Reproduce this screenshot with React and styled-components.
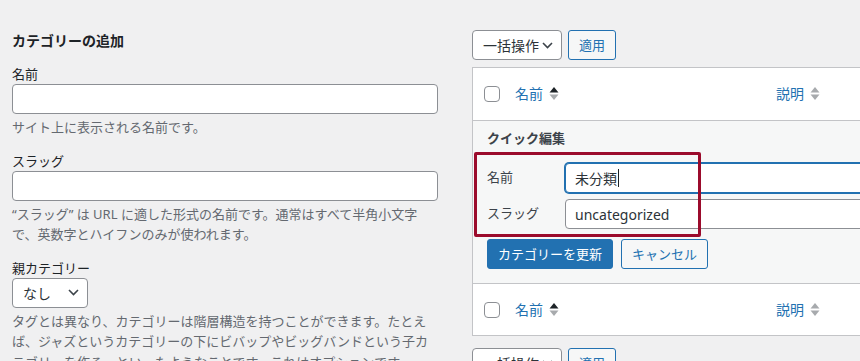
import React from "react";
import styled, { createGlobalStyle } from "styled-components";

const FONT = `"Noto Sans", "Noto Sans CJK JP", sans-serif`;

const GlobalStyle = createGlobalStyle`
  body {
    margin: 0;
    background: #f0f0f1;
    font-family: ${FONT};
    color: #1d2327;
    overflow: hidden;
  }
`;

function Chevron() {
    return (
        <svg width="11" height="7" viewBox="0 0 11 7">
            <polyline points="1,1 5.5,5.5 10,1" fill="none" stroke="#3c434a" strokeWidth="1.6" />
        </svg>
    );
}

function SortArrows({ active }) {
    return (
        <svg width="10" height="14" viewBox="0 0 10 14">
            <polygon points="5,0 9.5,5.5 0.5,5.5" fill={active ? "#1d2327" : "#a7aaad"} />
            <polygon points="0.5,7.5 9.5,7.5 5,13" fill="#a7aaad" />
        </svg>
    );
}

function BulkActions() {
    return (
        <Toolbar>
            <SelectBox width={90}>
                一括操作
                <Chevron />
            </SelectBox>
            <Button>適用</Button>
        </Toolbar>
    );
}

function HeaderRow({ top }) {
    return (
        <TableRow top={top}>
            <CheckCell><Checkbox /></CheckCell>
            <SortLink>名前 <SortArrows active /></SortLink>
            <SortLink>説明 <SortArrows /></SortLink>
        </TableRow>
    );
}

export default function App() {
    return (
        <Main>
            <GlobalStyle />
            <LeftCol>
                <Heading>カテゴリーの追加</Heading>
                <Field>
                    <Label>名前</Label>
                    <TextInput />
                    <Desc>サイト上に表示される名前です。</Desc>
                </Field>
                <Field>
                    <Label>スラッグ</Label>
                    <TextInput />
                    <Desc>
                        “スラッグ” は URL に適した形式の名前です。通常はすべて半角小文字<br />
                        で、英数字とハイフンのみが使われます。
                    </Desc>
                </Field>
                <Field>
                    <Label>親カテゴリー</Label>
                    <SelectBox width={76}>
                        なし
                        <Chevron />
                    </SelectBox>
                    <Desc>
                        タグとは異なり、カテゴリーは階層構造を持つことができます。たとえ<br />
                        ば、ジャズというカテゴリーの下にビバップやビッグバンドという子カ<br />
                        テゴリーを作る、といったようなことです。これはオプションです。
                    </Desc>
                </Field>
            </LeftCol>

            <RightCol>
                <BulkActions />
                <Table>
                    <HeaderRow />
                    <QuickEdit>
                        <QuickTitle>クイック編集</QuickTitle>
                        <EditRow>
                            <EditLabel>名前</EditLabel>
                            <EditInput focused>
                                未分類<Caret />
                            </EditInput>
                        </EditRow>
                        <EditRow>
                            <EditLabel>スラッグ</EditLabel>
                            <EditInput>uncategorized</EditInput>
                        </EditRow>
                        <Actions>
                            <Button primary>カテゴリーを更新</Button>
                            <Button>キャンセル</Button>
                        </Actions>
                        <Highlight />
                    </QuickEdit>
                    <HeaderRow top />
                </Table>
                <BottomBar>
                    <BulkActions />
                </BottomBar>
            </RightCol>
        </Main>
    );
}

const Main = styled.div`
    display: flex;
    gap: 34px;
    padding-left: 12px;
    width: 860px;
    height: 361px;
    box-sizing: border-box;
    overflow: hidden;
`;

const LeftCol = styled.div`
    flex: none;
    width: 426px;
    padding-top: 31px;
`;

const Heading = styled.h2`
    margin: 0 0 13px;
    font-size: 14px;
    font-weight: 700;
    line-height: 20px;
`;

const Field = styled.div`
    margin-bottom: 13px;
`;

const Label = styled.label`
    display: block;
    font-size: 13px;
    line-height: 20px;
`;

const TextInput = styled.div`
    width: 100%;
    height: 30px;
    box-sizing: border-box;
    background: #fff;
    border: 1px solid #8c8f94;
    border-radius: 4px;
`;

const Desc = styled.p`
    margin: 3px 0 0;
    font-size: 13px;
    line-height: 20.5px;
    color: #646970;
`;

const SelectBox = styled.div`
    width: ${p => p.width}px;
    height: 30px;
    box-sizing: border-box;
    display: flex;
    align-items: center;
    justify-content: space-between;
    padding: 0 8px 0 10px;
    background: #fff;
    border: 1px solid #8c8f94;
    border-radius: 4px;
    font-size: 14px;
    color: #2c3338;
`;

const RightCol = styled.div`
    flex: none;
    width: 560px;
    padding-top: 30px;
`;

const Toolbar = styled.div`
    display: flex;
    gap: 6px;
    height: 30px;
`;

const Button = styled.button`
    height: 30px;
    box-sizing: border-box;
    padding: 0 10px;
    border-radius: 3px;
    border: 1px solid #2271b1;
    background: ${p => (p.primary ? "#2271b1" : "#f6f7f7")};
    color: ${p => (p.primary ? "#fff" : "#2271b1")};
    font-family: ${FONT};
    font-size: 13px;
    line-height: 28px;
    cursor: pointer;
`;

const Table = styled.div`
    margin-top: 7px;
    background: #fff;
    border: 1px solid #c3c4c7;
`;

const TableRow = styled.div`
    display: grid;
    grid-template-columns: 42px 261px 1fr;
    align-items: center;
    height: ${p => (p.top ? 51 : 52)}px;
    box-sizing: border-box;
`;

const CheckCell = styled.div`
    padding-left: 11px;
    display: flex;
    align-items: center;
`;

const Checkbox = styled.span`
    width: 16px;
    height: 16px;
    box-sizing: border-box;
    border: 1px solid #8c8f94;
    border-radius: 4px;
    background: #fff;
`;

const SortLink = styled.a`
    display: flex;
    align-items: center;
    gap: 6px;
    color: #2271b1;
    font-size: 14px;
    line-height: 20px;
`;

const QuickEdit = styled.div`
    position: relative;
    background: #f6f7f7;
    border-top: 1px solid #c3c4c7;
    border-bottom: 1px solid #c3c4c7;
    padding: 7px 14px 14px;
`;

const QuickTitle = styled.div`
    font-size: 13px;
    font-weight: 700;
    line-height: 20px;
    color: #3c434a;
    margin-bottom: 15px;
`;

const EditRow = styled.div`
    display: grid;
    grid-template-columns: 78px 420px;
    align-items: center;
    margin-bottom: 6px;
`;

const EditLabel = styled.span`
    font-size: 13px;
    line-height: 18px;
    color: #3c434a;
    margin-top: -2px;
`;

const EditInput = styled.div`
    height: 30px;
    box-sizing: border-box;
    display: flex;
    align-items: center;
    padding: 0 9px;
    background: #fff;
    border: 1px solid ${p => (p.focused ? "#2271b1" : "#8c8f94")};
    box-shadow: ${p => (p.focused ? "0 0 0 1px #2271b1" : "none")};
    border-radius: 4px;
    font-size: 14px;
    color: #2c3338;
`;

const Caret = styled.span`
    display: inline-block;
    width: 1px;
    height: 18px;
    margin-left: 1px;
    background: #1d2327;
`;

const Actions = styled.div`
    display: flex;
    gap: 8px;
    margin-top: 10px;
`;

const Highlight = styled.div`
    position: absolute;
    left: 1px;
    top: 31px;
    width: 227px;
    height: 85px;
    box-sizing: border-box;
    border: 3px solid #9b0b2c;
    border-radius: 2px;
    pointer-events: none;
`;

const BottomBar = styled.div`
    margin-top: 12px;
`;
